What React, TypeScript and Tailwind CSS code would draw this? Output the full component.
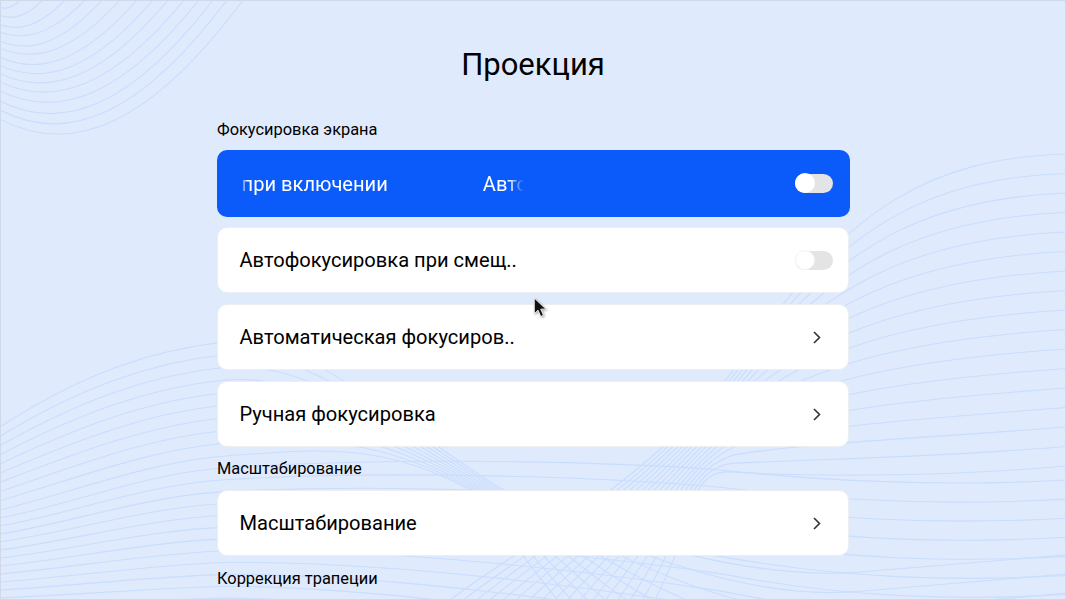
const lerp = (a: number, b: number, t: number) => a + (b - a) * t;

function familyPath(top: number[], bottom: number[], t: number) {
	const p = top.map((v, i) => lerp(v, bottom[i], t).toFixed(1));
	let d = `M${p[0]} ${p[1]}`;
	for (let i = 2; i < p.length; i += 6) {
		d += ` C${p[i]} ${p[i + 1]} ${p[i + 2]} ${p[i + 3]} ${p[i + 4]} ${p[i + 5]}`;
	}
	return d;
}

// left crest running down to the trough on the right
const crestTop = [0, 427, 80, 375, 150, 350, 225, 342, 310, 335, 390, 420, 500, 488, 620, 545, 760, 580, 860, 572, 950, 565, 1010, 560, 1066, 555];
const crestBottom = [0, 510, 80, 490, 150, 462, 225, 456, 310, 450, 380, 440, 470, 490, 540, 560, 640, 780, 860, 745, 950, 738, 1010, 733, 1066, 726];
// flat lines that cross the whole page
const flatTop = [0, 518, 70, 505, 150, 472, 225, 468, 400, 456, 620, 462, 720, 470, 850, 484, 960, 486, 1066, 480];
const flatBottom = [0, 606, 70, 604, 150, 600, 225, 598, 400, 600, 620, 640, 720, 660, 850, 694, 960, 696, 1066, 690];
// fan coming in from the right edge and folding down
const fanTop = [1066, 154, 930, 158, 850, 210, 760, 335, 700, 420, 640, 470, 590, 505, 540, 540, 490, 570, 450, 600];
const fanBottom = [1066, 466, 930, 478, 800, 476, 730, 472, 705, 470, 695, 490, 685, 525, 675, 560, 665, 580, 650, 610];

const corner = [
	[131, 243], [121, 227], [111, 213], [100, 199], [90, 184], [81, 168], [72, 153],
	[63, 137], [53, 120], [45, 102], [35, 85], [27, 65], [17, 43], [8, 20],
];

function Waves() {
	return (
		<svg className="absolute inset-0" width="1066" height="600" fill="none" stroke="#c9ddfd" strokeWidth="1.1">
			{corner.map(([b, t]) => (
				<path key={t} d={`M0 ${0.91 * b} C${0.3 * t} ${1.2 * b} ${0.62 * t} ${0.95 * b} ${t} 0`} />
			))}
			{Array.from({ length: 10 }, (_, i) => (
				<path key={i} d={familyPath(crestTop, crestBottom, i / 9)} />
			))}
			{Array.from({ length: 12 }, (_, i) => (
				<path key={i} d={familyPath(flatTop, flatBottom, i / 11)} />
			))}
			{Array.from({ length: 17 }, (_, i) => (
				<path key={i} d={familyPath(fanTop, fanBottom, i / 16)} />
			))}
		</svg>
	);
}

function Toggle({ muted }: { muted?: boolean }) {
	return (
		<div className="relative w-[38px] h-[19px] rounded-full bg-[#e4e4e4]">
			<div className={`absolute left-0 top-[-1px] w-[20px] h-[20px] rounded-full bg-white ${muted ? "border border-[#f4f4f4]" : ""}`} />
		</div>
	);
}

function Chevron() {
	return (
		<svg width="8" height="13" viewBox="0 0 8 13" fill="none" stroke="#333333" strokeWidth="1.6" className="mr-[12px]">
			<path d="M1 1l5.5 5.5L1 12" />
		</svg>
	);
}

function Row({ title, margin, children }: { title: string; margin: string; children: React.ReactNode }) {
	return (
		<div className={`flex items-center justify-between bg-white border border-[#eceef2] rounded-[10px] pl-[22px] pr-[15px] h-[66px] ${margin}`}>
			<span className="text-[20.1px] text-black -ml-[0.5px]">{title}</span>
			{children}
		</div>
	);
}

function Label({ children, margin }: { children: React.ReactNode; margin: string }) {
	return <div className={`h-[24px] leading-[24px] text-[16.4px] text-black ${margin}`}>{children}</div>;
}

function Cursor() {
	return (
		<svg className="absolute left-[531px] top-[296px] drop-shadow-[1px_1px_1px_rgba(0,0,0,0.35)]" width="17" height="25" viewBox="0 0 16 24">
			<path d="M3 2v15l3.6-3.4 2.6 6 2.6-1.1-2.6-5.9h5z" fill="#111111" stroke="#ffffff" strokeWidth="0.8" />
		</svg>
	);
}

export default function App() {
	return (
		<div className="relative w-[1066px] h-[600px] overflow-hidden bg-[#dfeafd] font-['Roboto',sans-serif]">
			<Waves />
			<div className="absolute inset-0 border border-[#cfd9ea]" />
			<div className="relative w-[632px] mx-auto pt-[41px]">
				<h1 className="h-[48px] leading-[48px] text-[31px] text-black text-center">Проекция</h1>
				<Label margin="mt-[29px]">Фокусировка экрана</Label>
				<div className="flex items-center justify-between -mr-px h-[67px] mt-[8px] rounded-[10px] bg-[#0a5bfa] pl-[23px] pr-[17px]">
					<div className="w-[284px] pt-[2px] overflow-hidden [mask-image:linear-gradient(90deg,transparent,black_8px,black_268px,transparent)]">
						<div className="flex gap-[95px] -ml-[173px] whitespace-nowrap text-[20.1px] text-white">
							<span>Автофокусировка при включении</span>
							<span>Автофокусировка при включении</span>
						</div>
					</div>
					<Toggle />
				</div>
				<Row title="Автофокусировка при смещ.." margin="mt-[10px]">
					<Toggle muted />
				</Row>
				<Row title="Автоматическая фокусиров.." margin="mt-[11px]">
					<Chevron />
				</Row>
				<Row title="Ручная фокусировка" margin="mt-[11px]">
					<Chevron />
				</Row>
				<Label margin="mt-[10px]">Масштабирование</Label>
				<Row title="Масштабирование" margin="mt-[9px]">
					<Chevron />
				</Row>
				<Label margin="mt-[11px]">Коррекция трапеции</Label>
			</div>
			<Cursor />
		</div>
	);
}
